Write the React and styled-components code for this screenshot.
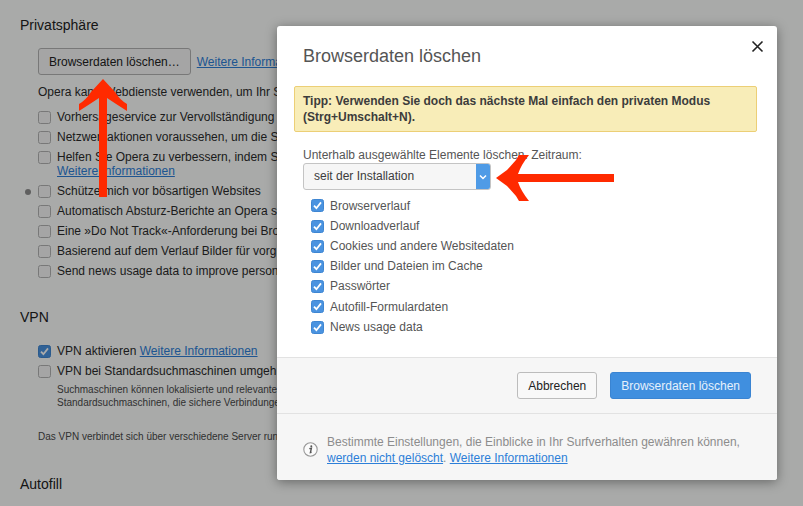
import React from "react";
import styled, { createGlobalStyle } from "styled-components";

const Global = createGlobalStyle`
  html, body { margin: 0; padding: 0; width: 803px; height: 506px; overflow: hidden; background: #fcfefd; }
  body { font-family: "Liberation Sans", Arial, sans-serif; font-size: 12px; color: #2b2b2b; }
  #root { width: 803px; height: 506px; position: relative; overflow: hidden; }
`;

const Page = styled.div`
  width: 277px;
  height: 506px;
  padding: 0 0 0 20px;
  box-sizing: border-box;
  white-space: nowrap;
  overflow: hidden;
`;
const Heading = styled.h2`
  margin: ${p => p.$top}px 0 0;
  font-size: 14px;
  font-weight: 400;
  line-height: 16px;
  color: #222;
`;
const Indent = styled.div`
  padding-left: 18px;
`;
const Link = styled.a`
  color: #2d7fd8;
  text-decoration: underline;
`;
const GhostButton = styled.div`
  display: inline-flex;
  align-items: center;
  box-sizing: border-box;
  height: 27px;
  padding: 0 10px;
  border: 1px solid #b4b4b4;
  border-radius: 3px;
  background: #f6f6f6;
  color: #222;
`;
const ButtonRow = styled.div`
  display: flex;
  align-items: center;
  gap: 6px;
  margin-top: 15px;
`;
const Intro = styled.div`
  margin-top: 10px;
  line-height: 14px;
`;
const List = styled.div`
  margin-top: ${p => p.$top}px;
`;
const SettingRow = styled.div`
  position: relative;
  display: flex;
  gap: 6px;
  align-items: flex-start;
  min-height: 20px;
  line-height: 13.5px;
  padding: 3px 0 ${p => (p.$tall ? 4 : 0)}px;
  box-sizing: border-box;
`;
const Dot = styled.span`
  position: absolute;
  left: -13px;
  top: 7px;
  width: 6px;
  height: 6px;
  border-radius: 50%;
  background: #8e8e8e;
`;
const RowText = styled.div`
  padding-top: 0;
`;
const Small = styled.div`
  font-size: 10px;
  line-height: 13px;
  color: #4a4a4a;
  padding-left: ${p => p.$left || 0}px;
  margin-top: ${p => p.$top || 0}px;
`;
const Box = styled.span`
  flex: none;
  display: inline-flex;
  align-items: center;
  justify-content: center;
  width: 13px;
  height: 13px;
  box-sizing: border-box;
  border-radius: 2.5px;
  border: 1px solid ${p => (p.$checked ? "#3f86d2" : "#b3b3b3")};
  background: ${p => (p.$checked ? "#4a93e0" : "#f7f7f7")};
`;
const Check = ({ checked }) => (
  <Box $checked={checked}>
    {checked && (
      <svg width="11" height="11" viewBox="0 0 11 11">
        <path d="M2 5.6 L4.4 8.2 L9 2.4" fill="none" stroke="#fff" strokeWidth="1.8" />
      </svg>
    )}
  </Box>
);

const Scrim = styled.div`
  position: absolute;
  inset: 0;
  background: rgba(0, 0, 0, 0.33);
`;
const Modal = styled.div`
  position: absolute;
  left: 277px;
  top: 26px;
  width: 500px;
  height: 454px;
  display: flex;
  flex-direction: column;
  background: #fff;
  border-radius: 3px;
  box-shadow: 0 2px 12px rgba(0, 0, 0, 0.4);
  color: #555;
  overflow: hidden;
`;
const Close = styled.div`
  position: absolute;
  right: 13px;
  top: 14px;
  width: 13px;
  height: 13px;
`;
const Title = styled.h1`
  margin: 0;
  padding: 19px 26px 0;
  height: 60px;
  box-sizing: border-box;
  font-size: 18px;
  line-height: 22px;
  font-weight: 400;
  color: #555;
`;
const Tip = styled.div`
  margin: 0 20px 0 17px;
  padding: 6px 8px;
  height: 46px;
  box-sizing: border-box;
  border: 1px solid #eccf76;
  border-radius: 2px;
  background: #f8edb8;
  color: #3c3c3c;
  font-weight: 700;
  line-height: 16px;
`;
const Form = styled.div`
  flex: 1;
  padding: 16px 26px 0;
`;
const FieldLabel = styled.div`
  line-height: 14px;
  color: #555;
`;
const Select = styled.div`
  display: flex;
  margin-top: 1px;
  width: 188px;
  height: 27px;
  box-sizing: border-box;
  border: 1px solid #c4c4c4;
  border-radius: 3px;
  background: #f6f6f6;
  overflow: hidden;
`;
const SelectValue = styled.div`
  flex: 1;
  padding-left: 10px;
  line-height: 25px;
  color: #3c3c3c;
`;
const SelectArrow = styled.div`
  width: 14px;
  display: flex;
  align-items: center;
  justify-content: center;
  background: #4f9be6;
`;
const Options = styled.div`
  margin-top: 5px;
  padding-left: 8px;
`;
const Option = styled.div`
  display: flex;
  align-items: center;
  gap: 6px;
  height: ${p => p.$h}px;
  color: #555;
`;
const Actions = styled.div`
  display: flex;
  justify-content: flex-end;
  gap: 13px;
  height: 56px;
  box-sizing: border-box;
  padding: 14px 26px 0;
  background: #f6f6f6;
  border-top: 1px solid #e2e2e2;
`;
const Btn = styled.div`
  box-sizing: border-box;
  height: 27px;
  display: flex;
  align-items: center;
  padding: 0 10px;
  border-radius: 3px;
  border: 1px solid ${p => (p.$primary ? "#3a84d2" : "#bcbcbc")};
  background: ${p => (p.$primary ? "#408fdf" : "#f8f8f8")};
  color: ${p => (p.$primary ? "#e6f1fb" : "#222")};
`;
const Note = styled.div`
  display: flex;
  align-items: center;
  gap: 9px;
  height: 67px;
  box-sizing: border-box;
  padding: 5px 26px 0;
  background: #f6f6f6;
  border-top: 1px solid #e2e2e2;
  color: #8c8c8c;
  line-height: 16px;
`;
const Arrows = styled.svg`
  position: absolute;
  left: 0;
  top: 0;
  pointer-events: none;
`;

const rows = [
  { t: "Vorhersageservice zur Vervollständigung" },
  { t: "Netzwerkaktionen voraussehen, um die S" },
  { t: "Helfen Sie Opera zu verbessern, indem S", link: true },
  { t: "Schütze mich vor bösartigen Websites", dot: true },
  { t: "Automatisch Absturz-Berichte an Opera s" },
  { t: "Eine »Do Not Track«-Anforderung bei Bro" },
  { t: "Basierend auf dem Verlauf Bilder für vorg" },
  { t: "Send news usage data to improve person" },
];
const options = [
  ["Browserverlauf", 21],
  ["Downloadverlauf", 20],
  ["Cookies und andere Websitedaten", 20],
  ["Bilder und Dateien im Cache", 20],
  ["Passwörter", 20],
  ["Autofill-Formulardaten", 21],
  ["News usage data", 20],
];

export default function App() {
  return (
    <>
      <Global />
      <Page>
        <Heading $top={17}>Privatsphäre</Heading>
        <Indent>
          <ButtonRow>
            <GhostButton>Browserdaten löschen…</GhostButton>
            <Link>Weitere Informa</Link>
          </ButtonRow>
          <Intro>Opera kann Webdienste verwenden, um Ihr S</Intro>
          <List $top={9}>
            {rows.map(r => (
              <SettingRow key={r.t} $tall={r.link}>
                {r.dot && <Dot />}
                <Check />
                <RowText>
                  {r.t}
                  {r.link && (
                    <>
                      <br />
                      <Link>Weitere Informationen</Link>
                    </>
                  )}
                </RowText>
              </SettingRow>
            ))}
          </List>
        </Indent>
        <Heading $top={27}>VPN</Heading>
        <Indent>
          <List $top={17}>
            <SettingRow>
              <Check checked />
              <RowText>
                VPN aktivieren <Link>Weitere Informationen</Link>
              </RowText>
            </SettingRow>
            <SettingRow>
              <Check />
              <RowText>VPN bei Standardsuchmaschinen umgeh</RowText>
            </SettingRow>
          </List>
          <Small $left={19} $top={1}>
            Suchmaschinen können lokalisierte und relevante
            <br />
            Standardsuchmaschinen, die sichere Verbindunge
          </Small>
          <Small $top={21}>Das VPN verbindet sich über verschiedene Server run</Small>
        </Indent>
        <Heading $top={33}>Autofill</Heading>
      </Page>
      <Scrim />
      <Modal>
        <Close>
          <svg width="13" height="13" viewBox="0 0 13 13">
            <path d="M1.5 1.5 L11.5 11.5 M11.5 1.5 L1.5 11.5" stroke="#222" strokeWidth="1.6" fill="none" />
          </svg>
        </Close>
        <Title>Browserdaten löschen</Title>
        <Tip>
          Tipp: Verwenden Sie doch das nächste Mal einfach den privaten Modus
          <br />
          (Strg+Umschalt+N).
        </Tip>
        <Form>
          <FieldLabel>Unterhalb ausgewählte Elemente löschen. Zeitraum:</FieldLabel>
          <Select>
            <SelectValue>seit der Installation</SelectValue>
            <SelectArrow>
              <svg width="8" height="6" viewBox="0 0 8 6">
                <path d="M1 1.5 L4 4.5 L7 1.5" fill="none" stroke="#fff" strokeWidth="1.5" />
              </svg>
            </SelectArrow>
          </Select>
          <Options>
            {options.map(([t, h]) => (
              <Option key={t} $h={h}>
                <Check checked />
                {t}
              </Option>
            ))}
          </Options>
        </Form>
        <Actions>
          <Btn>Abbrechen</Btn>
          <Btn $primary>Browserdaten löschen</Btn>
        </Actions>
        <Note>
          <svg width="15" height="15" viewBox="0 0 15 15" style={{ flex: "none" }}>
            <circle cx="7.5" cy="7.5" r="6.7" fill="#fbfbfb" stroke="#999" strokeWidth="1.1" />
            <circle cx="8.3" cy="4.2" r="1" fill="#555" />
            <path d="M6.3 6.6 L8.4 6.2 L7.4 10.6 L8.6 10.4" fill="none" stroke="#555" strokeWidth="1.4" />
          </svg>
          <div>
            Bestimmte Einstellungen, die Einblicke in Ihr Surfverhalten gewähren können,
            <br />
            <Link>werden nicht gelöscht</Link>. <Link>Weitere Informationen</Link>
          </div>
        </Note>
      </Modal>
      <Arrows width="803" height="506" viewBox="0 0 803 506">
        <path
          d="M103 79 L115 92 Q120 100 127 104 L127 111 Q116 104 107 98 L107 197 L99 197 L99 98 Q90 104 79 111 L79 104 Q86 100 91 92 Z"
          fill="#ff2a00"
        />
        <path
          d="M496 178 L507 170 L516 160 L519 155 L529 155 Q521 165 518 174 L614 174 L614 182 L518 182 Q521 191 529 201 L519 201 L516 196 L507 186 Z"
          fill="#ff2a00"
        />
      </Arrows>
    </>
  );
}
